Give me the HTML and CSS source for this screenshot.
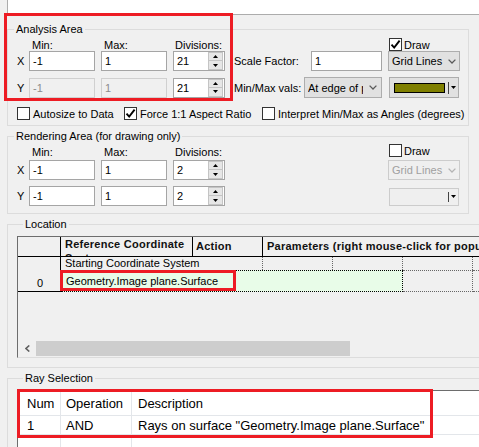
FILE: index.html
```html
<!DOCTYPE html>
<html>
<head>
<meta charset="utf-8">
<link rel="stylesheet" href="styles.css">
</head>
<body>
<div class="topbar"></div>

<fieldset class="group g-analysis">
  <legend>Analysis Area</legend>
  <div class="rows">
    <div class="row head">
      <span></span><span class="hl">Min:</span><span class="hl">Max:</span><span class="hl hl-div">Divisions:</span><span></span>
      <div class="cb draw"><span class="box"><svg width="11" height="11" viewBox="0 0 11 11"><path d="M1.5 5.6 L4.2 8.6 L9.6 1.6" fill="none" stroke="#000" stroke-width="1.9"/></svg></span>Draw</div>
    </div>
    <div class="row field">
      <span class="axis">X</span>
      <div class="input">-1</div>
      <div class="input">1</div>
      <div class="spin"><span class="val">21</span><span class="btns"><span class="btn"><svg width="5" height="3" viewBox="0 0 5 3"><path d="M0 3 L2.5 0 L5 3Z" fill="#000"/></svg></span><span class="btn"><svg width="5" height="3" viewBox="0 0 5 3"><path d="M0 0 L2.5 3 L5 0Z" fill="#000"/></svg></span></span></div>
      <div class="pair"><span>Scale Factor:</span><div class="input w71">1</div></div>
      <div class="combo w72"><span>Grid Lines</span><svg class="chev" width="8" height="5" viewBox="0 0 8 5"><polyline points="0.6,0.6 4,4 7.4,0.6" fill="none" stroke="#5a5a5a" stroke-width="1.3"/></svg></div>
    </div>
    <div class="row field">
      <span class="axis">Y</span>
      <div class="input dis">-1</div>
      <div class="input dis">1</div>
      <div class="spin"><span class="val">21</span><span class="btns"><span class="btn"><svg width="5" height="3" viewBox="0 0 5 3"><path d="M0 3 L2.5 0 L5 3Z" fill="#000"/></svg></span><span class="btn"><svg width="5" height="3" viewBox="0 0 5 3"><path d="M0 0 L2.5 3 L5 0Z" fill="#000"/></svg></span></span></div>
      <div class="pair"><span>Min/Max vals:</span><div class="combo w78 h21"><span class="clip">At edge of plot</span><svg class="chev" width="8" height="5" viewBox="0 0 8 5"><polyline points="0.6,0.6 4,4 7.4,0.6" fill="none" stroke="#5a5a5a" stroke-width="1.3"/></svg></div></div>
      <div class="colorpick"><span class="swatch"></span><span class="sep"></span><svg class="arr" width="5" height="3" viewBox="0 0 5 3"><path d="M0 0 L5 0 L2.5 3Z" fill="#000"/></svg></div>
    </div>
    <div class="checks">
      <div class="cb c1"><span class="box"></span>Autosize to Data</div>
      <div class="cb c2"><span class="box"><svg width="11" height="11" viewBox="0 0 11 11"><path d="M1.5 5.6 L4.2 8.6 L9.6 1.6" fill="none" stroke="#000" stroke-width="1.9"/></svg></span>Force 1:1 Aspect Ratio</div>
      <div class="cb"><span class="box"></span>Interpret Min/Max as Angles (degrees)</div>
    </div>
  </div>
</fieldset>

<fieldset class="group g-render">
  <legend>Rendering Area (for drawing only)</legend>
  <div class="rows">
    <div class="row head">
      <span></span><span class="hl">Min:</span><span class="hl">Max:</span><span class="hl hl-div">Divisions:</span><span></span>
      <div class="cb draw top"><span class="box"></span>Draw</div>
    </div>
    <div class="row field">
      <span class="axis">X</span>
      <div class="input">-1</div>
      <div class="input">1</div>
      <div class="spin"><span class="val">2</span><span class="btns"><span class="btn"><svg width="5" height="3" viewBox="0 0 5 3"><path d="M0 3 L2.5 0 L5 3Z" fill="#000"/></svg></span><span class="btn"><svg width="5" height="3" viewBox="0 0 5 3"><path d="M0 0 L2.5 3 L5 0Z" fill="#000"/></svg></span></span></div>
      <span></span>
      <div class="combo w72 cdis"><span>Grid Lines</span><svg class="chev" width="8" height="5" viewBox="0 0 8 5"><polyline points="0.6,0.6 4,4 7.4,0.6" fill="none" stroke="#b4b4b4" stroke-width="1.3"/></svg></div>
    </div>
    <div class="row field">
      <span class="axis">Y</span>
      <div class="input">-1</div>
      <div class="input">1</div>
      <div class="spin"><span class="val">2</span><span class="btns"><span class="btn"><svg width="5" height="3" viewBox="0 0 5 3"><path d="M0 3 L2.5 0 L5 3Z" fill="#000"/></svg></span><span class="btn"><svg width="5" height="3" viewBox="0 0 5 3"><path d="M0 0 L2.5 3 L5 0Z" fill="#000"/></svg></span></span></div>
      <span></span>
      <div class="colorpick pdis"><span class="noswatch"></span><span class="sep"></span><svg class="arr" width="5" height="3" viewBox="0 0 5 3"><path d="M0 0 L5 0 L2.5 3Z" fill="#000"/></svg></div>
    </div>
  </div>
</fieldset>

<fieldset class="group g-loc">
  <legend>Location</legend>
  <div class="grid">
    <div class="gh">
      <div class="ghc rh"></div>
      <div class="ghc ref">Reference Coordinate System</div>
      <div class="ghc act">Action</div>
      <div class="ghc par">Parameters (right mouse-click for popup menu)</div>
    </div>
    <div class="grow">
      <div class="grh">0</div>
      <div class="gcells">
        <div class="sub1">
          <div class="gcell ca">Starting Coordinate System</div>
          <div class="gcell cw"></div>
          <div class="gcell cw"></div>
          <div class="gcell cw"></div>
          <div class="gcell cr"></div>
        </div>
        <div class="sub2">
          <div class="gcell green">Geometry.Image plane.Surface</div>
          <div class="gcell cw"></div>
          <div class="gcell cr"></div>
        </div>
      </div>
    </div>
    <div class="gspace"></div>
    <div class="hscroll">
      <div class="sarrow"><svg width="5" height="7" viewBox="0 0 5 7"><polyline points="4.3,0.5 1,3.5 4.3,6.5" fill="none" stroke="#606060" stroke-width="1.6"/></svg></div>
      <div class="thumb"></div>
    </div>
  </div>
</fieldset>

<fieldset class="group g-ray">
  <legend>Ray Selection</legend>
  <div class="rtable">
    <div class="rrow rhead">
      <div class="rc r1">Num</div>
      <div class="rc r2">Operation</div>
      <div class="rc r3">Description</div>
    </div>
    <div class="rrow rdata">
      <div class="rc r1">1</div>
      <div class="rc r2">AND</div>
      <div class="rc r3">Rays on surface "Geometry.Image plane.Surface"</div>
    </div>
    <div class="rrow rempty">
      <div class="rc r1"></div>
      <div class="rc r2"></div>
      <div class="rc r3"></div>
    </div>
  </div>
</fieldset>

<div class="mark m1"></div>
<div class="mark m2"></div>
<div class="mark m3"></div>
</body>
</html>
```

FILE: styles.css
```css
html, body {
  margin: 0;
  padding: 0;
}
body {
  width: 479px;
  height: 447px;
  overflow: hidden;
  position: relative;
  background: #f0f0f0;
  font-family: "Liberation Sans", Arial, sans-serif;
  font-size: 11px;
  color: #000;
}
.topbar {
  height: 14px;
  margin-left: 7px;
  background: #fff;
  border-left: 1px solid #acacac;
  border-bottom: 1px solid #acacac;
}

/* group boxes */
.group {
  box-sizing: border-box;
  width: 462px;
  min-width: 0;
  margin: 0 0 0 7px;
  padding: 0;
  border: 1px solid #dcdcdc;
}
.group legend {
  padding: 0 2px;
  margin-left: 6px;
  height: 14px;
  line-height: 14px;
}
.g-analysis { margin-top: 7px; }
.g-analysis .rows { padding: 2px 0 5px; }
.g-render { margin-top: 3px; }
.g-render .rows { padding: 1px 0 7px; }
.g-render .head { height: 16px; }
.g-loc { margin-top: 3px; width: 620px; padding: 5px 0 9px 9px; }
.g-ray { margin-top: 3px; width: 620px; padding: 5px 0 0 9px; }

/* form rows */
.row {
  display: grid;
  grid-template-columns: 21px 72px 72px 61px 154px 72px;
}
.head { height: 13px; align-items: center; }
.hl { padding-left: 3px; }
.hl-div { padding-left: 2px; }
.field { height: 20px; align-items: center; }
.field + .field { margin-top: 6px; }
.axis { padding-left: 9px; }

.input {
  box-sizing: border-box;
  width: 66px;
  height: 20px;
  border: 1px solid #a5a5a5;
  background: #fff;
  padding-left: 3px;
  line-height: 18px;
  white-space: nowrap;
}
.input.w71 { width: 71px; }
.input.dis {
  background: #f0f0f0;
  border-color: #d0d0d0;
  color: #8c8c8c;
}

.spin {
  box-sizing: border-box;
  display: flex;
  width: 52px;
  height: 20px;
  border: 1px solid #a5a5a5;
  background: #fff;
}
.spin .val {
  flex: 1;
  padding-left: 3px;
  line-height: 18px;
}
.spin .btns {
  display: flex;
  flex-direction: column;
  width: 15px;
  margin-right: 1px;
}
.spin .btn {
  box-sizing: border-box;
  height: 9px;
  display: flex;
  align-items: center;
  justify-content: center;
  background: #e6e6e6;
  border: 1px solid #c4c4c4;
}
.spin .btn + .btn { border-top: none; }

.pair {
  display: flex;
  align-items: center;
  justify-content: space-between;
  width: 148px;
}

.combo {
  box-sizing: border-box;
  display: flex;
  align-items: center;
  justify-content: space-between;
  height: 20px;
  border: 1px solid #adadad;
  background: #e1e1e1;
  padding: 0 3px 0 3px;
  white-space: nowrap;
}
.combo.w72 { width: 72px; }
.combo.w78 { width: 78px; padding-right: 4px; }
.combo.h21 { height: 21px; }
.combo .clip {
  width: 55px;
  overflow: hidden;
}
.combo.cdis {
  background: #efefef;
  border-color: #cccccc;
  color: #a0a0a0;
}

.colorpick {
  box-sizing: border-box;
  display: flex;
  align-items: center;
  width: 70px;
  height: 21px;
  margin-left: 1px;
  padding-left: 4px;
  border: 1px solid #adadad;
  background: #e1e1e1;
}
.swatch {
  box-sizing: border-box;
  width: 51px;
  height: 10px;
  border: 1px solid #000;
  background: #808000;
}
.noswatch {
  width: 51px;
  height: 10px;
}
.sep {
  width: 1px;
  height: 12px;
  margin-left: 3px;
  background: #444;
}
.arr { margin-left: 2px; }
.colorpick.pdis {
  height: 18px;
  margin-top: 1px;
  background: #efefef;
  border-color: #cccccc;
}
.pdis .sep { height: 10px; }

/* checkboxes */
.checks {
  display: flex;
  align-items: center;
  height: 13px;
  margin-top: 10px;
  padding-left: 9px;
}
.cb {
  display: flex;
  align-items: center;
  white-space: nowrap;
}
.cb.c1 { width: 107px; }
.cb.c2 { width: 138px; }
.box {
  box-sizing: border-box;
  width: 13px;
  height: 13px;
  margin-right: 3px;
  border: 1px solid #333;
  background: #fff;
  display: flex;
  align-items: center;
  justify-content: center;
  flex: none;
}
.draw { margin-left: 1px; }
.draw .box { margin-right: 2px; }
.draw.top { align-self: start; }

/* location grid */
.grid {
  height: 120px;
  border-top: 1px solid #6d6d6d;
  border-left: 1px solid #6d6d6d;
  border-bottom: 1px solid #dcdcdc;
  display: flex;
  flex-direction: column;
  overflow: hidden;
}
.gh {
  display: flex;
  height: 19px;
  border-bottom: 1px solid #000;
  font-weight: bold;
  letter-spacing: 0.25px;
  color: #111;
  flex: none;
}
.ghc {
  box-sizing: border-box;
  height: 19px;
  line-height: 13px;
  overflow: hidden;
  border-right: 1px solid #000;
  padding-top: 3px;
}
.ghc.rh { width: 43px; }
.ghc.ref { width: 132px; padding: 0 0 0 4px; line-height: 14px; }
.ghc.act { width: 70px; padding-left: 3px; }
.ghc.par { width: 320px; padding-left: 4px; white-space: nowrap; border-right: none; }

.grow {
  display: flex;
  flex: none;
}
.grh {
  box-sizing: border-box;
  width: 43px;
  height: 35px;
  border-right: 1px solid #000;
  border-bottom: 1px solid #000;
  display: flex;
  align-items: flex-end;
  justify-content: center;
  padding-left: 2px;
  line-height: 13px;
  padding-bottom: 1px;
}
.gcells {
  display: flex;
  flex-direction: column;
}
.sub1, .sub2 { display: flex; }
.sub1 { height: 13px; }
.sub2 { height: 22px; }
.gcell {
  box-sizing: border-box;
  white-space: nowrap;
  line-height: 13px;
}
.sub1 .gcell { height: 13px; border-right: 1px dotted #666; }
.sub1 .ca { width: 202px; padding-left: 4px; }
.gcell.cw { width: 70px; }
.gcell.cr { width: 60px; border-right: none; }
.sub2 .gcell {
  height: 22px;
  border-top: 1px dotted #666;
  border-bottom: 1px dotted #666;
  border-right: 1px dotted #666;
}
.sub2 .gcell.cr { border-right: none; }
.sub2 .green {
  width: 342px;
  background: #e8fce8;
  border-color: #000;
  padding-left: 5px;
  line-height: 20px;
}
.gspace { flex: 1; }
.hscroll {
  display: flex;
  height: 17px;
  flex: none;
}
.sarrow {
  width: 17px;
  display: flex;
  align-items: center;
  justify-content: center;
  padding-left: 2px;
  box-sizing: border-box;
}
.thumb {
  width: 314px;
  height: 15px;
  margin: 1px 0 0 1px;
  background: #cdcdcd;
}

/* ray selection table */
.rtable {
  border-top: 1px solid #6d6d6d;
  border-left: 1px solid #6d6d6d;
  background: #fff;
  font-size: 13px;
  height: 80px;
}
.rrow {
  display: flex;
  border-bottom: 1px solid #e3e6ea;
}
.rhead { height: 24px; line-height: 25px; }
.rdata { height: 18px; line-height: 19px; }
.rempty { height: 20px; }
.rc {
  box-sizing: border-box;
  white-space: nowrap;
  border-right: 1px solid #e3e6ea;
}
.rc.r1 { width: 43px; padding-left: 9px; }
.rc.r2 { width: 71px; padding-left: 5px; }
.rc.r3 { width: 480px; padding-left: 6px; border-right: none; }

/* annotation boxes */
.mark {
  position: absolute;
  box-sizing: border-box;
  border: 3px solid #ed1c24;
}
.m1 { left: 4px; top: 13px; width: 229px; height: 88px; }
.m2 { left: 60px; top: 270px; width: 176px; height: 21px; }
.m3 { left: 17px; top: 389px; width: 416px; height: 49px; }
```
